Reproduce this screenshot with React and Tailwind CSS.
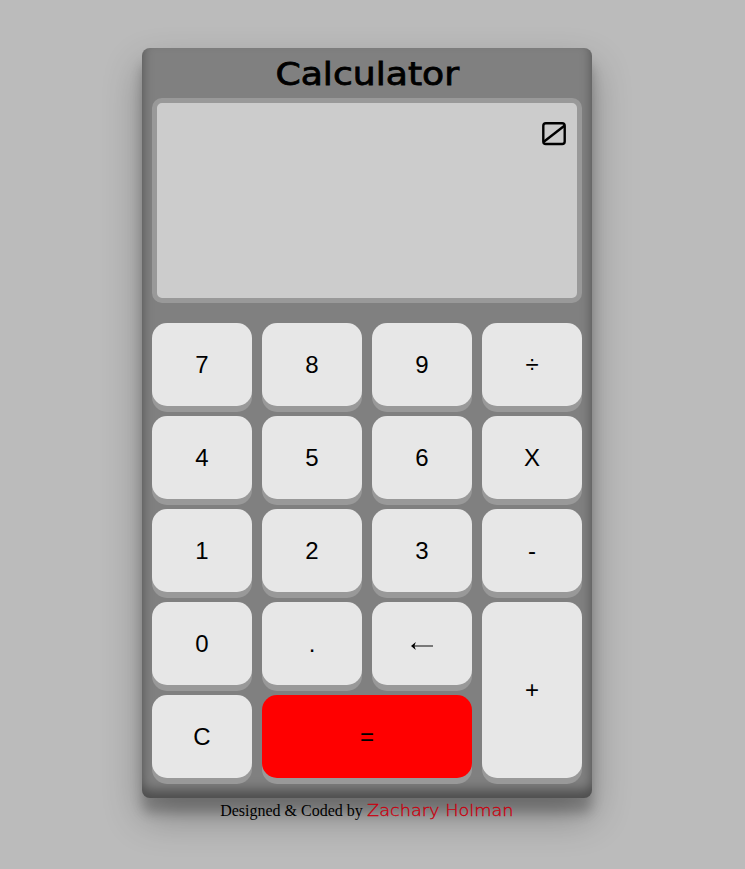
const keys = [
  ['7'], ['8'], ['9'], ['÷'],
  ['4'], ['5'], ['6'], ['X'],
  ['1'], ['2'], ['3'], ['-'],
  ['0'], ['.'], ['←'], ['+', 'row-span-2'],
  ['C'], ['=', 'col-span-2 bg-[#ff0000]'],
];

function BackArrow() {
  return (
    <svg className="mt-1 h-[10px] w-6" viewBox="0 0 24 10" fill="none" aria-label="←">
      <path d="M4 5H23" stroke="#555" strokeWidth="1.5" />
      <path d="M1 5 5.8 1 4.4 5 5.8 9Z" fill="black" />
    </svg>
  );
}

function Key({ label, extra = '' }) {
  const color = label === '=' ? '' : 'bg-[#e7e7e7]';
  return (
    <button className={`flex items-center justify-center rounded-[15px] text-2xl text-black shadow-[0_6px_#999] ${color} ${extra}`}>
      {label === '←' ? <BackArrow /> : label}
    </button>
  );
}

export default function App() {
  return (
    <div className="flex h-[869px] w-[745px] flex-col bg-[#bbb] pt-12 pl-[142px] font-['Liberation_Sans',sans-serif]">
      <main className="h-[750px] w-[450px] rounded-lg bg-[#808080] px-[10px] shadow-[0_19px_38px_rgba(0,0,0,0.30),0_15px_12px_rgba(0,0,0,0.22),inset_0_-8px_12px_rgba(0,0,0,0.4)]">
        <h1 className="flex h-[50px] items-center justify-center pt-[2px] font-['DejaVu_Sans',sans-serif] text-[32px] font-normal">
          <span className="inline-block origin-center scale-x-[1.13] [-webkit-text-stroke:0.8px_black]">Calculator</span>
        </h1>
        <section className="flex h-[205px] justify-end rounded-[10px] border-[5px] border-[#999] bg-[#ccc] pt-[19px] pr-[11px]">
          <svg className="h-6 w-6" viewBox="0 0 24 24" fill="none" stroke="black" strokeWidth="2.4" aria-label="0">
            <rect x="1.3" y="1.2" width="21.4" height="20.8" rx="2.6" />
            <path d="M1.8 19.8 22.4 3.8" />
          </svg>
        </section>
        <section className="mt-5 grid grid-cols-4 grid-rows-[repeat(5,83px)] gap-[10px]">
          {keys.map(([label, extra]) => <Key key={label} label={label} extra={extra} />)}
        </section>
      </main>
      <footer className="flex h-6 w-[450px] items-center justify-center pt-px font-['Liberation_Serif',serif] text-base whitespace-pre">
        Designed &amp; Coded by{' '}
        <span className="w-[147px] font-['DejaVu_Sans',sans-serif] text-[#c8000f]">
          <span className="inline-block origin-left scale-x-[1.18] text-[15px] font-extralight [-webkit-text-stroke:0.3px_#c8000f]">Zachary Holman</span>
        </span>
      </footer>
    </div>
  );
}
